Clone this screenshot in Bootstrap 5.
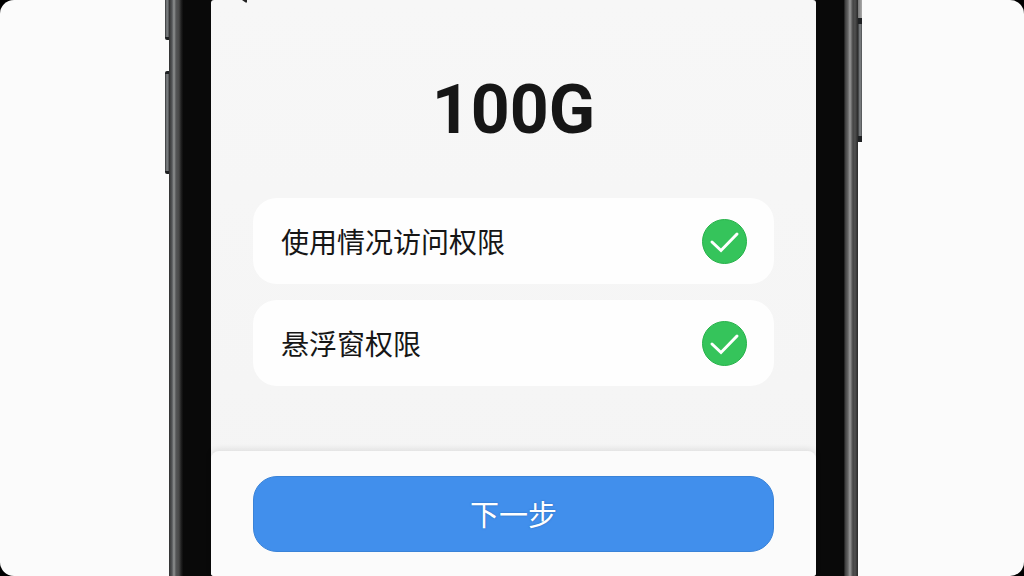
<!DOCTYPE html>
<html lang="zh-CN">
<head>
<meta charset="utf-8">
<meta name="viewport" content="width=device-width, initial-scale=1">
<title>权限设置</title>
<link href="https://cdn.jsdelivr.net/npm/bootstrap@5.3.0/dist/css/bootstrap.min.css" rel="stylesheet">
<style>
body { background: #000; color: #161616; font-family: "Noto Sans CJK SC", sans-serif; }
.stage { background: #fbfbfb; border-radius: 14px; padding-left: 3px; }
.phone { width: 100%; max-width: 689px; background: #090909; }
.rail { width: 14px; }
.rail-start { background: linear-gradient(90deg, #303030 0, #555759 3px, #909292 5px, #555657 7px, #484848 10px, #222 12px, #0c0c0c 14px); }
.rail-end { background: linear-gradient(270deg, #282828 0, #505050 3px, #444 5px, #999 8px, #666 10px, #3c3c3c 13px, #111 14px); }
.side-key { width: 4px; background: linear-gradient(90deg, #303234, #85888a, #4b4e50); border: solid #1f2123; border-width: 3px 0; }
.key-a { left: -4px; top: -4px; height: 44px; border-radius: 2px 0 0 2px; }
.key-b { left: -4px; top: 71px; height: 103px; border-radius: 2px 0 0 2px; }
.key-c { right: -4px; top: 18px; height: 124px; border-width: 6px 0; }
.key-d { right: -4px; top: -4px; height: 22px; border: 0; background: linear-gradient(90deg, #777, #aaa); }
.screen { margin: 0 28px; background: linear-gradient(#f7f7f7, #f4f4f4); border-radius: 3px; }
.back-tip { left: 31px; top: 0; }
.capacity { font: 700 68px/80px Roboto, sans-serif; padding-top: 70px; margin-bottom: 48px; }
.permissions, .actions { padding-left: 42px; padding-right: 42px; }
.permissions { gap: 16px; }
.permission { min-height: 86px; padding: 0 27px 0 28px; border-radius: 24px; background: #fefefe; font-size: 28px; line-height: 40px; }
.actions { padding-top: 25px; padding-bottom: 24px; background: #fbfbfb; border-radius: 8px 8px 3px 3px; box-shadow: 0 -2px 6px rgba(0,0,0,.09); }
.next { --bs-btn-color: #fff; --bs-btn-bg: #418fec; --bs-btn-hover-color: #fff; --bs-btn-hover-bg: #347fda; --bs-btn-border-color: #3a83d8; height: 76px; padding: 0 0 2px; border-radius: 24px; font-size: 29px; line-height: 40px; text-shadow: 0 0 2px #2867b0; }
</style>
</head>
<body>
<div class="stage min-vh-100 d-flex justify-content-center overflow-hidden">
  <div class="phone position-relative d-flex">
    <span class="side-key key-a position-absolute"></span>
    <span class="side-key key-b position-absolute"></span>
    <span class="side-key key-c position-absolute"></span>
    <span class="side-key key-d position-absolute"></span>
    <div class="rail rail-start flex-shrink-0"></div>
    <main class="screen position-relative flex-grow-1 d-flex flex-column">
      <svg class="back-tip position-absolute" width="6" height="3" viewBox="0 0 6 3" aria-hidden="true"><path d="M0 0h5v2.5H3.6z" fill="#222"/></svg>
      <h1 class="capacity text-center">100G</h1>
      <ul class="permissions list-unstyled d-flex flex-column mb-4">
        <li class="permission d-flex align-items-center justify-content-between">
          <span>使用情况访问权限</span>
          <svg width="45" height="45" viewBox="0 0 45 45" role="img" aria-label="已开启"><circle cx="22.5" cy="22.5" r="22" fill="#35c45b" stroke="#27b24a"/><path d="M10 23l9 8.5L35 15" fill="none" stroke="#fff" stroke-width="3" stroke-linecap="round"/></svg>
        </li>
        <li class="permission d-flex align-items-center justify-content-between">
          <span>悬浮窗权限</span>
          <svg width="45" height="45" viewBox="0 0 45 45" role="img" aria-label="已开启"><circle cx="22.5" cy="22.5" r="22" fill="#35c45b" stroke="#27b24a"/><path d="M10 23l9 8.5L35 15" fill="none" stroke="#fff" stroke-width="3" stroke-linecap="round"/></svg>
        </li>
      </ul>
      <div class="actions mt-auto">
        <button type="button" class="next btn w-100">下一步</button>
      </div>
    </main>
    <div class="rail rail-end flex-shrink-0"></div>
  </div>
</div>
<script src="https://cdn.jsdelivr.net/npm/bootstrap@5.3.0/dist/js/bootstrap.bundle.min.js"></script>
</body>
</html>
